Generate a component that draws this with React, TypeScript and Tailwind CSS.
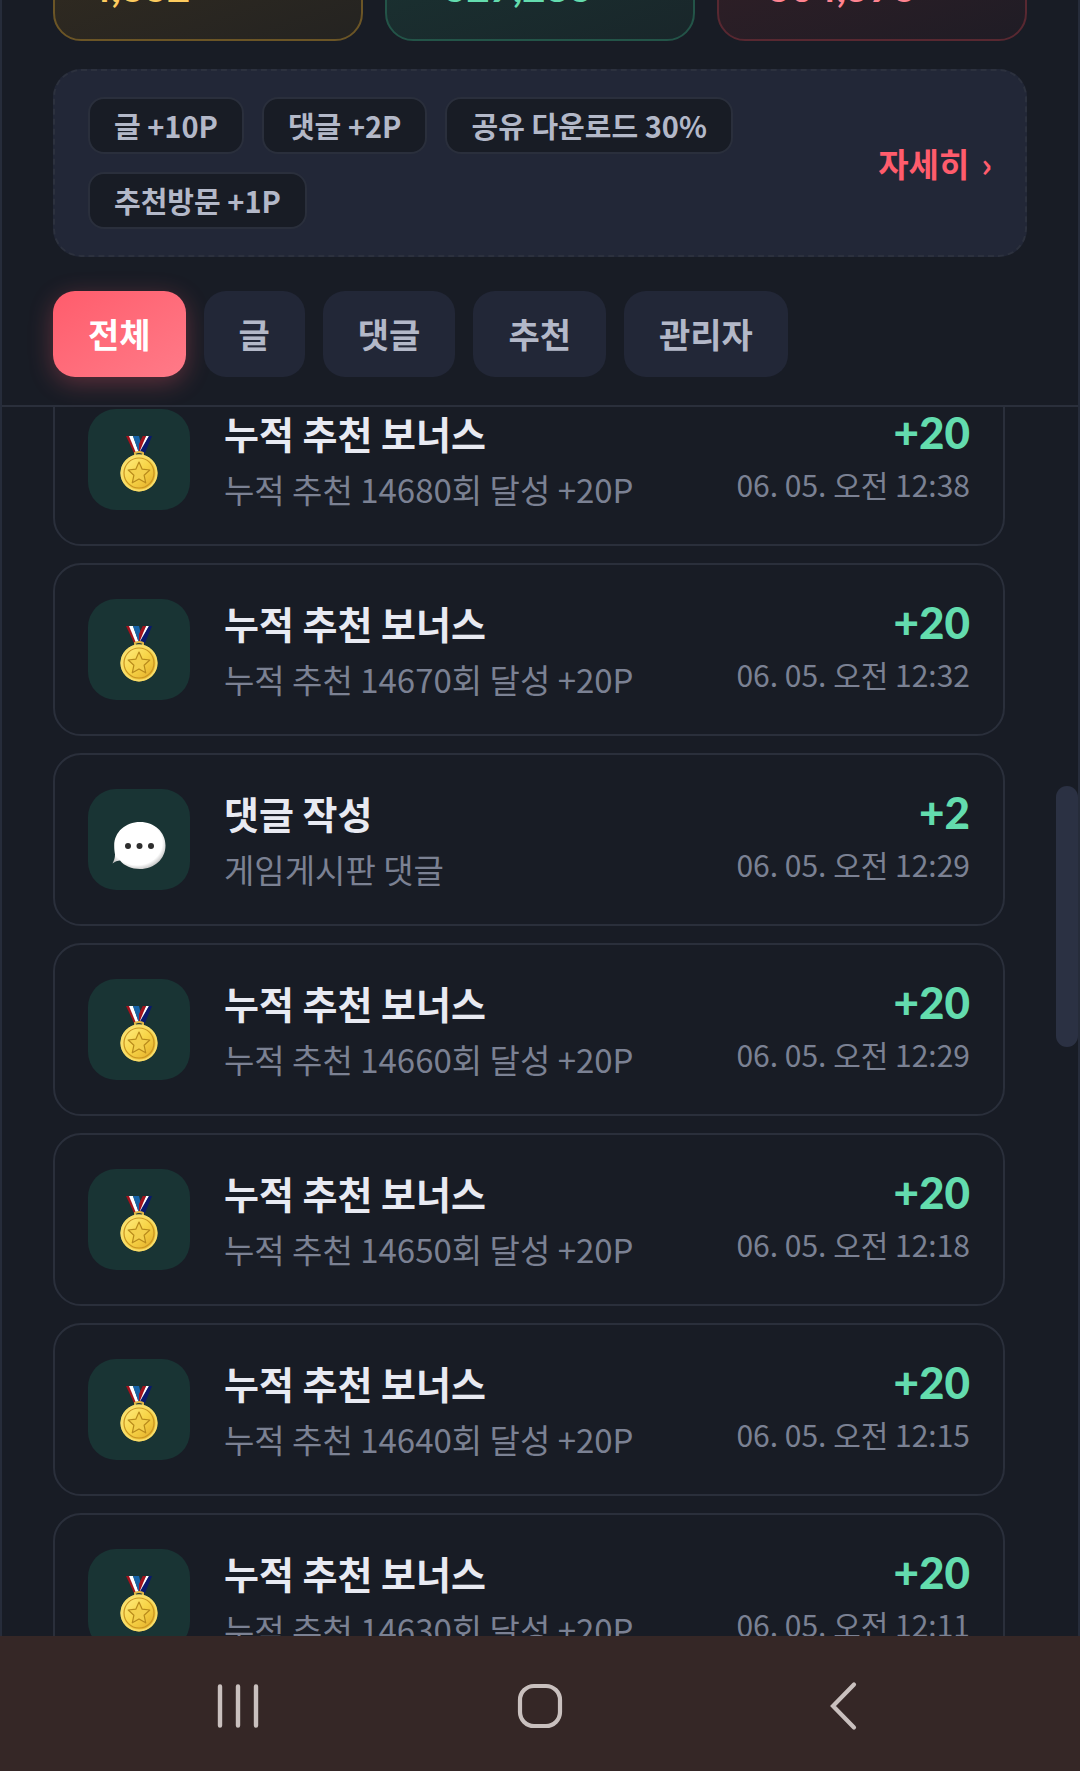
import React, { useState } from 'react';

const stats = [
  {
    value: '4,662',
    box: 'border-[#6b5526] from-[#332c20] to-[#242321]',
    text: 'text-[#fdcb5e]'
  },
  {
    value: '+327,283',
    box: 'border-[#235448] from-[#1a3332] to-[#19262a]',
    text: 'text-[#63dcae]'
  },
  {
    value: '-304,576',
    box: 'border-[#582831] from-[#321f26] to-[#1f1c25]',
    text: 'text-[#ff8390]'
  }
];

const rules = ['글 +10P', '댓글 +2P', '공유 다운로드 30%', '추천방문 +1P'];

const tabs = ['전체', '글', '댓글', '추천', '관리자'];

const bonus = (count: number, time: string) => ({
  type: 'bonus',
  title: '누적 추천 보너스',
  detail: `누적 추천 ${count}회 달성 +20P`,
  amount: '+20',
  date: `06. 05. 오전 ${time}`
});

const history = [
  bonus(14680, '12:38'),
  bonus(14670, '12:32'),
  {
    type: 'comment',
    title: '댓글 작성',
    detail: '게임게시판 댓글',
    amount: '+2',
    date: '06. 05. 오전 12:29'
  },
  bonus(14660, '12:29'),
  bonus(14650, '12:18'),
  bonus(14640, '12:15'),
  bonus(14630, '12:11')
];

function MedalIcon() {
  return (
    <svg width="56" height="56" viewBox="0 0 56 56" aria-hidden="true">
      <defs>
        <linearGradient id="gold" x1="0" y1="0" x2="1" y2="1">
          <stop offset="0" stopColor="#fff08c" />
          <stop offset="0.5" stopColor="#f8d548" />
          <stop offset="1" stopColor="#dda220" />
        </linearGradient>
      </defs>
      <path d="M32 0h3l-8 17h-4z" fill="#b3101c" />
      <path d="M35 0h3l-9 17h-3z" fill="#fff" />
      <path d="M38 0h3l-7 17h-6z" fill="#0a1a6e" />
      <path d="M15 0h4l8 17h-4z" fill="#a3141e" />
      <path d="M18 0h4l6 17h-3z" fill="#fff" />
      <path d="M22 0h6l2 8-2 9z" fill="#1763a8" />
      <path d="M28 8l4-8h3l-7 17z" fill="#a3141e" />
      <path d="M24 19v-2q4-2 8 0v2" fill="none" stroke="#e0b546" strokeWidth="2" />
      <circle cx="28" cy="37" r="18.5" fill="url(#gold)" />
      <circle cx="28" cy="37" r="17.5" fill="none" stroke="#f7dd6a" strokeWidth="2" />
      <circle cx="28" cy="37" r="15" fill="none" stroke="#c99522" strokeWidth="1.2" />
      <path
        d="M28 26l3.2 7.2 7.6.8-5.7 5.2 1.6 7.6-6.7-3.9-6.7 3.9 1.6-7.6-5.7-5.2 7.6-.8z"
        fill="#f3cf4b"
        stroke="#b88a1c"
        strokeWidth="1.2"
        strokeLinejoin="round"
      />
    </svg>
  );
}

function BubbleIcon() {
  return (
    <svg width="56" height="56" viewBox="0 2 56 56" aria-hidden="true">
      <defs>
        <radialGradient id="bubble" cx="0.46" cy="0.44" r="0.58">
          <stop offset="0.82" stopColor="#fff" />
          <stop offset="1" stopColor="#c4c4c4" />
        </radialGradient>
      </defs>
      <path
        d="M29 8c14.500 0 25.500 10 25.500 23.500S43.500 55 29 55c-8.500 0-15.500-3-20-8.500C6.500 46.500 4 47.500 1.500 49.500c1.500-3 2.500-5.500 2.500-9C3.500 37.500 3.200 35 3.200 31.500 3.200 18 14.500 8 29 8z"
        fill="url(#bubble)"
      />
      <circle cx="17" cy="32" r="3" fill="#2e2e2e" />
      <circle cx="28.500" cy="32" r="3" fill="#2e2e2e" />
      <circle cx="40" cy="32" r="3" fill="#2e2e2e" />
    </svg>
  );
}

function App() {
  const [active, setActive] = useState('전체');

  return (
    <div className="flex h-screen flex-col overflow-hidden bg-[#181c25] font-['Noto_Sans_CJK_KR',sans-serif]">
      <main className="flex min-h-0 flex-1 flex-col border-x-2 border-[#262c3a]">
        <header className="shrink-0 border-b-2 border-[#2a2f3b] px-[51px] pb-7">
          <div className="flex h-[41px] items-end gap-[22px] overflow-hidden">
            {stats.map((stat) => (
              <div
                key={stat.value}
                className={`${stat.box} ${stat.text} flex-1 rounded-[28px] border-2 bg-linear-to-br px-[33px] pt-9 pb-7 font-['Lato',sans-serif] text-[40px] leading-[48px] font-black`}
              >
                {stat.value}
              </div>
            ))}
          </div>

          <section className="mt-7 flex items-center justify-between gap-4 rounded-[28px] border-2 border-dashed border-[#2c313e] bg-[#222737] px-[33px] py-[26px]">
            <ul className="flex flex-1 flex-wrap gap-[18px]">
              {rules.map((rule) => (
                <li
                  key={rule}
                  className="rounded-2xl border-2 border-[#2a2f3c] bg-[#181c25] px-6 py-[6px] text-[29px] leading-[41px] font-bold text-[#b3b8c8]"
                >
                  {rule}
                </li>
              ))}
            </ul>
            <a
              href="#"
              className="flex gap-3 text-[33px] leading-[46px] font-bold text-[#ff5c6c]"
            >
              <span>자세히</span>
              <span>›</span>
            </a>
          </section>

          <nav className="mt-[34px] flex gap-[18px]">
            {tabs.map((tab) => (
              <button
                key={tab}
                type="button"
                onClick={() => setActive(tab)}
                className={`${
                  active === tab
                    ? 'bg-linear-to-br from-[#ff5c6c] to-[#ff7a88] text-white shadow-[0_6px_24px_rgba(255,92,108,0.3)]'
                    : 'bg-[#222737] text-[#b3b8c8]'
                } rounded-[22px] px-[35px] py-[19px] text-[34px] leading-[48px] font-bold`}
              >
                {tab}
              </button>
            ))}
          </nav>
        </header>

        <div className="flex min-h-0 flex-1 overflow-hidden">
          <ul className="-mt-[34px] flex min-w-0 flex-1 flex-col gap-[17px] px-[51px]">
            {history.map((item) => (
              <li
                key={item.detail}
                className="flex shrink-0 items-center gap-[34px] rounded-[28px] border-2 border-[#2a2f3b] px-[33px] py-7"
              >
                <div className="flex h-[101px] w-[102px] shrink-0 items-center justify-center rounded-[28px] bg-[#193434] pt-2">
                  {item.type === 'comment' ? <BubbleIcon /> : <MedalIcon />}
                </div>
                <div className="min-w-0 flex-1">
                  <h3 className="text-[38px] leading-[60px] font-bold text-[#e8eaf2]">
                    {item.title}
                  </h3>
                  <p className="truncate text-[33px] leading-[53px] text-[#7b8193]">
                    {item.detail}
                  </p>
                </div>
                <div className="shrink-0 pb-1 text-right">
                  <p className="font-['Lato',sans-serif] text-[44px] leading-[52px] font-black text-[#63dcae]">
                    {item.amount}
                  </p>
                  <p className="text-[30px] leading-[52px] text-[#7b8193]">{item.date}</p>
                </div>
              </li>
            ))}
          </ul>
          <div className="w-[22px] shrink-0 pt-[379px]">
            <div className="h-[261px] rounded-full bg-[#2b3143]"></div>
          </div>
        </div>
      </main>

      <footer className="flex shrink-0 items-center justify-center gap-[246px] bg-[#352726] py-[39px] text-[#c9c0be]">
        <button type="button" aria-label="최근 앱">
          <svg width="56" height="57" viewBox="0 1 56 57" fill="none" stroke="currentColor" strokeWidth="4.400" strokeLinecap="round">
            <path d="M10 12.500v39M28 12.500v39M46 12.500v39" />
          </svg>
        </button>
        <button type="button" aria-label="홈">
          <svg width="56" height="57" viewBox="0 1 56 57" fill="none" stroke="currentColor" strokeWidth="4.200">
            <rect x="8" y="12" width="40" height="40" rx="14" />
          </svg>
        </button>
        <button type="button" aria-label="뒤로">
          <svg width="56" height="57" viewBox="-2 1 56 57" fill="none" stroke="currentColor" strokeWidth="4.200" strokeLinecap="round">
            <path d="M38 10.500L17 32l21 21.500" />
          </svg>
        </button>
      </footer>
    </div>
  );
}

export default App;
